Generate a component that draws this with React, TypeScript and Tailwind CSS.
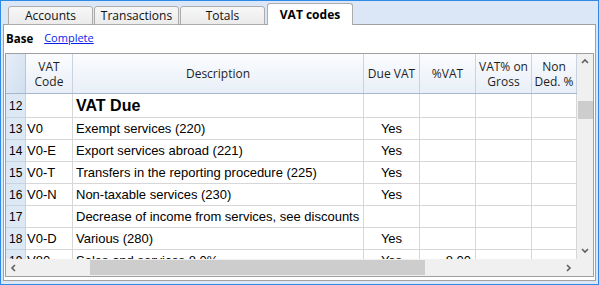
import React from "react";

const ui = { fontFamily: '"Open Sans", "Noto Sans", sans-serif' };
const grid = { fontFamily: '"Liberation Sans", Arial, sans-serif' };

const rows = [
  { n: "12", code: "", desc: "VAT Due", due: "", pct: "", head: true },
  { n: "13", code: "V0", desc: "Exempt services (220)", due: "Yes", pct: "" },
  { n: "14", code: "V0-E", desc: "Export services abroad (221)", due: "Yes", pct: "" },
  { n: "15", code: "V0-T", desc: "Transfers in the reporting procedure (225)", due: "Yes", pct: "" },
  { n: "16", code: "V0-N", desc: "Non-taxable services (230)", due: "Yes", pct: "" },
  { n: "17", code: "", desc: "Decrease of income from services, see discounts", due: "", pct: "" },
  { n: "18", code: "V0-D", desc: "Various (280)", due: "Yes", pct: "" },
  { n: "19", code: "V80", desc: "Sales and services 8.0%", due: "Yes", pct: "8.00" },
];

const tabs = ["Accounts", "Transactions", "Totals"];

function Chevron({ dir }: { dir: "up" | "down" | "left" | "right" }) {
  const d = {
    up: "M1 5 L4 2 L7 5",
    down: "M1 2 L4 5 L7 2",
    left: "M5 1 L2 4 L5 7",
    right: "M2 1 L5 4 L2 7",
  }[dir];
  return (
    <svg width="8" height="8" viewBox="0 0 8 8">
      <path d={d} fill="none" stroke="#606060" strokeWidth="1.6" />
    </svg>
  );
}

export default function App() {
  return (
    <div className="w-[599px] h-[285px] border border-[#2e8ae4] bg-[#dbe6f7] overflow-hidden flex flex-col" style={ui}>
      {/* Tabs */}
      <div className="h-[23px] flex items-end pl-[7px] gap-[1px] relative z-10">
        {tabs.map((t) => (
          <div
            key={t}
            className="w-[85px] h-[19px] mb-[-1px] border border-[#acacac] rounded-t-[3px] bg-gradient-to-b from-[#f7f7f7] to-[#ebebeb] text-[12px] text-[#111] flex items-center justify-center"
          >
            {t}
          </div>
        ))}
        <div className="w-[86px] h-[22px] mb-[-1px] ml-[1px] border border-b-0 border-[#acacac] rounded-t-[3px] bg-white text-[12px] font-bold text-black flex items-center justify-center">
          VAT codes
        </div>
      </div>

      {/* Panel */}
      <div className="ml-[2px] w-[593px] h-[257px] border border-[#a0a0a0] bg-white px-[1px] pb-[2px] flex flex-col">
        <div className="h-[28px] flex items-center gap-[11px] pl-[1px] pb-[1px]">
          <span className="text-[11.5px] font-bold text-black">Base</span>
          <span className="text-[11px] text-[#0a1ee8] underline">Complete</span>
        </div>

        {/* Table */}
        <div className="w-[589px] h-[224px] border border-[#a0a0a0] flex flex-col">
          <div className="flex h-[205px]">
            <div className="w-[571px] h-[205px] overflow-hidden">
              {/* Header */}
              <div className="flex h-[40px] border-b border-[#a6b6cc] text-[12px] text-[#1e1e1e] leading-[15px] text-center">
                <div className="w-[20px] border-r border-[#b8c6d8] bg-gradient-to-br from-[#e6eef8] to-[#d2dff0]" />
                <div className="w-[47px] border-r border-[#c9d3e0] bg-gradient-to-b from-[#fbfcfe] to-[#e8eff8] flex items-center justify-center">VAT<br />Code</div>
                <div className="w-[291px] border-r border-[#c9d3e0] bg-gradient-to-b from-[#fbfcfe] to-[#e8eff8] flex items-center justify-center">Description</div>
                <div className="w-[56px] border-r border-[#c9d3e0] bg-gradient-to-b from-[#fbfcfe] to-[#e8eff8] flex items-center justify-center">Due VAT</div>
                <div className="w-[56px] border-r border-[#c9d3e0] bg-gradient-to-b from-[#fbfcfe] to-[#e8eff8] flex items-center justify-center">%VAT</div>
                <div className="w-[56px] border-r border-[#c9d3e0] bg-gradient-to-b from-[#fbfcfe] to-[#e8eff8] flex items-center justify-center">VAT% on<br />Gross</div>
                <div className="w-[45px] border-r border-[#c9d3e0] bg-gradient-to-b from-[#fbfcfe] to-[#e8eff8] flex items-center justify-center">Non<br />Ded. %</div>
              </div>

              {/* Rows */}
              {rows.map((r) => (
                <div key={r.n} className={`flex ${r.head ? "h-[24px]" : "h-[22px]"} text-[13px] text-black`} style={grid}>
                  <div className="w-[20px] border-r border-b border-[#c6d3e4] bg-[#dde8f5] pl-[3px] text-[12px] flex items-center">{r.n}</div>
                  <div className="w-[47px] border-r border-b border-[#d7d7d7] pl-[1px] flex items-center">{r.code}</div>
                  <div className={`w-[291px] border-r border-b border-[#d7d7d7] pl-[3px] flex items-center whitespace-nowrap ${r.head ? "text-[16px] font-bold" : ""}`}>
                    {r.desc}
                  </div>
                  <div className="w-[56px] border-r border-b border-[#d7d7d7] flex items-center justify-center">{r.due}</div>
                  <div className="w-[56px] border-r border-b border-[#d7d7d7] flex items-center justify-end pr-[4px]">{r.pct}</div>
                  <div className="w-[56px] border-r border-b border-[#d7d7d7]" />
                  <div className="w-[45px] border-r border-b border-[#d7d7d7]" />
                </div>
              ))}
            </div>

            {/* Vertical scrollbar */}
            <div className="w-[16px] h-[205px] bg-[#f0f0f0] flex flex-col items-center">
              <div className="h-[16px] flex items-center justify-center"><Chevron dir="up" /></div>
              <div className="h-[31px]" />
              <div className="w-[15px] h-[18px] bg-[#cdcdcd]" />
              <div className="flex-1" />
              <div className="h-[16px] flex items-center justify-center"><Chevron dir="down" /></div>
            </div>
          </div>

          {/* Horizontal scrollbar */}
          <div className="flex h-[17px]">
            <div className="w-[571px] bg-[#f0f0f0] flex items-center">
              <div className="w-[16px] flex items-center justify-center"><Chevron dir="left" /></div>
              <div className="w-[68px]" />
              <div className="w-[335px] h-[15px] bg-[#cdcdcd]" />
              <div className="flex-1" />
              <div className="w-[16px] flex items-center justify-center"><Chevron dir="right" /></div>
            </div>
            <div className="w-[16px] bg-[#f0f0f0]" />
          </div>
        </div>
      </div>
    </div>
  );
}
